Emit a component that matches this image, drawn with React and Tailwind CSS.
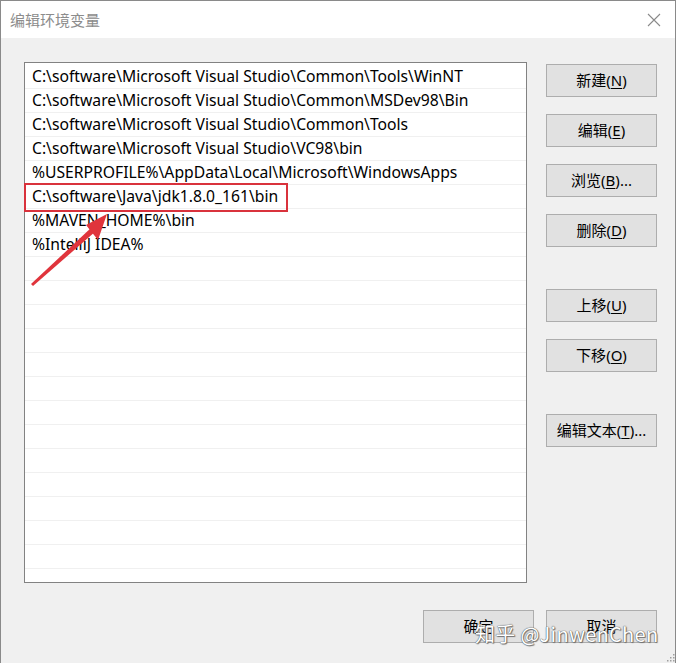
import React from "react";

const paths = [
  "C:\\software\\Microsoft Visual Studio\\Common\\Tools\\WinNT",
  "C:\\software\\Microsoft Visual Studio\\Common\\MSDev98\\Bin",
  "C:\\software\\Microsoft Visual Studio\\Common\\Tools",
  "C:\\software\\Microsoft Visual Studio\\VC98\\bin",
  "%USERPROFILE%\\AppData\\Local\\Microsoft\\WindowsApps",
  "C:\\software\\Java\\jdk1.8.0_161\\bin",
  "%MAVEN_HOME%\\bin",
  "%IntelliJ IDEA%",
];

const FONT = "font-['Segoe_UI','Noto_Sans','Noto_Sans_CJK_SC',sans-serif]";

function Btn({ label, hot, tail = "", className = "" }) {
  return (
    <button
      className={`h-[33px] w-[111px] bg-[#e1e1e1] border border-[#adadad] text-[15px] text-black ${FONT} ${className}`}
    >
      {label}
      {hot && (
        <>
          (<span className="underline underline-offset-2">{hot}</span>)
        </>
      )}
      {tail}
    </button>
  );
}

export default function App() {
  const rows = Array.from({ length: 22 }, (_, i) => paths[i] || "");

  return (
    <div className={`relative w-[677px] h-[664px] bg-white ${FONT}`}>
      <div className="w-[676px] h-[663px] border border-[#8a8a8a] flex flex-col">
        {/* title bar */}
        <div className="h-[37px] bg-white flex items-center justify-between pl-[9px] pr-[14px] shrink-0">
          <span className="text-[15px] text-[#8c8c8c] mt-[1px]">编辑环境变量</span>
          <svg width="14" height="14" viewBox="0 0 14 14" className="mt-[1px]">
            <path d="M1 1L13 13M13 1L1 13" stroke="#8a8a8a" strokeWidth="1.1" />
          </svg>
        </div>

        {/* body */}
        <div className="flex-1 bg-[#f0f0f0] flex flex-col pl-[23px] pr-[18px] pt-[24px] pb-[20px]">
          <div className="flex gap-[19px]">
            <div className="w-[504px] h-[521px] bg-white border border-[#828282] overflow-hidden pt-[2px]">
              {rows.map((r, i) => (
                <div
                  key={i}
                  className="h-[24px] border-b border-[#f0f0f0] pl-[7px] flex items-center text-[15.7px] text-black leading-none whitespace-nowrap"
                >
                  {r}
                </div>
              ))}
            </div>

            <div className="flex flex-col pt-[2px]">
              <Btn label="新建" hot="N" />
              <Btn label="编辑" hot="E" className="mt-[17px]" />
              <Btn label="浏览" hot="B" tail="..." className="mt-[17px]" />
              <Btn label="删除" hot="D" className="mt-[17px]" />
              <Btn label="上移" hot="U" className="mt-[42px]" />
              <Btn label="下移" hot="O" className="mt-[17px]" />
              <Btn label="编辑文本" hot="T" tail="..." className="mt-[42px]" />
            </div>
          </div>

          <div className="flex justify-end gap-[12px] mt-[27px]">
            <Btn label="确定" />
            <Btn label="取消" />
          </div>
        </div>
      </div>

      {/* red annotation box */}
      <div className="absolute left-[24px] top-[183px] w-[264px] h-[29px] border-2 border-[#d9323c] pointer-events-none" />

      {/* red arrow */}
      <svg className="absolute left-0 top-0 pointer-events-none" width="677" height="664">
        <polygon points="31,284 33,286 96,231 92,227" fill="#e0343c" />
        <polygon points="107,214 86,225 98,240" fill="#e0343c" />
      </svg>

      {/* resize grip */}
      <svg className="absolute right-[2px] bottom-[2px]" width="10" height="10" viewBox="0 0 10 10">
        {[[8, 2], [8, 5], [5, 5], [8, 8], [5, 8], [2, 8]].map(([x, y], i) => (
          <rect key={i} x={x} y={y} width="1.5" height="1.5" fill="#a0a0a0" />
        ))}
      </svg>

      {/* watermark */}
      <div className="absolute left-[475px] top-[624px] text-[20px] text-white tracking-[0.3px] [text-shadow:0_0_1px_#555,0_0_1px_#555,1px_1px_1px_#777] font-['Noto_Sans_CJK_SC','Noto_Sans',sans-serif] leading-none pointer-events-none">
        知乎 @JinwenChen
      </div>
    </div>
  );
}
